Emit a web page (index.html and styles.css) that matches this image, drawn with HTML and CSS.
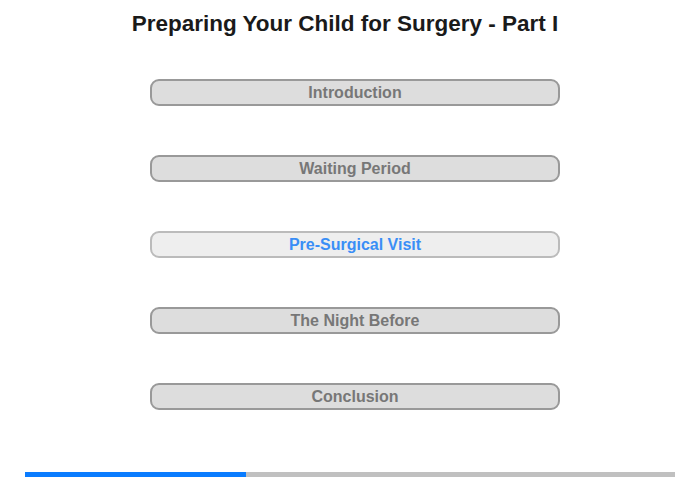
FILE: index.html
```html
<!DOCTYPE html>
<html>
<head>
<meta charset="utf-8">
<link rel="stylesheet" href="styles.css">
</head>
<body>
<div class="page">
  <h1 class="title">Preparing Your Child for Surgery - Part I</h1>
  <nav class="menu">
    <div class="item">Introduction</div>
    <div class="item">Waiting Period</div>
    <div class="item active">Pre-Surgical Visit</div>
    <div class="item">The Night Before</div>
    <div class="item">Conclusion</div>
  </nav>
  <div class="progress"><div class="progress-fill" style="width: 221px"></div></div>
</div>
</body>
</html>
```
FILE: styles.css
```css
html, body {
  margin: 0;
  padding: 0;
  background: #ffffff;
}
.page {
  width: 700px;
  height: 480px;
  font-family: "Liberation Sans", Arial, sans-serif;
  display: flex;
  flex-direction: column;
}
.title {
  margin: 11px 0 0 0;
  width: 690px;
  text-align: center;
  font-size: 22.5px;
  line-height: 26px;
  font-weight: bold;
  color: #1a1a1a;
}
.menu {
  margin: 42px 0 0 150px;
  width: 410px;
  display: flex;
  flex-direction: column;
  gap: 49px;
}
.item {
  box-sizing: border-box;
  height: 27px;
  border: 2px solid #999999;
  border-radius: 9px;
  background: #dddddd;
  color: #777777;
  font-size: 16px;
  font-weight: bold;
  line-height: 23px;
  text-align: center;
}
.item.active {
  background: #eeeeee;
  border-color: #bbbbbb;
  color: #3a8ef6;
}
.progress {
  margin: 62px 0 0 25px;
  width: 650px;
  height: 5px;
  background: #c0c0c0;
}
.progress-fill {
  height: 100%;
  background: #0a7cff;
}
```
